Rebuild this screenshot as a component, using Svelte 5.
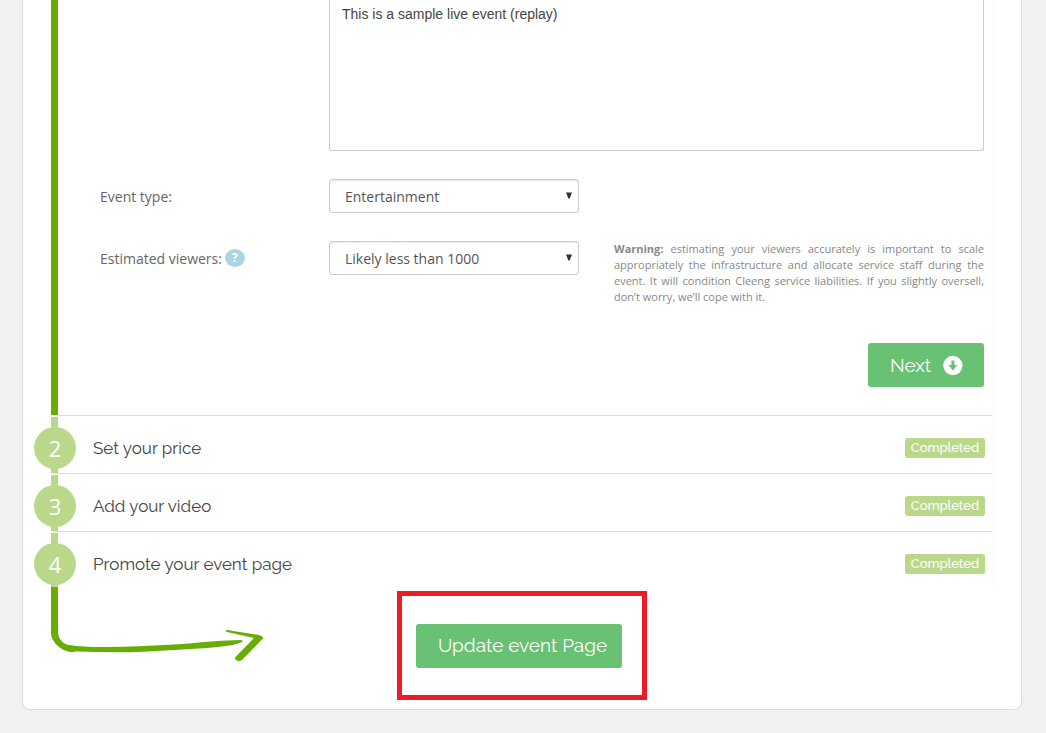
<script lang="ts">
  let description = $state('This is a sample live event (replay)');
  let eventType = $state('Entertainment');
  let viewers = $state('Likely less than 1000');

  const eventTypes = ['Entertainment', 'Sports', 'Education', 'Business'];
  const viewerRanges = ['Likely less than 1000', '1000 to 5000', 'More than 5000'];

  const steps = [
    { n: 2, title: 'Set your price', status: 'Completed' },
    { n: 3, title: 'Add your video', status: 'Completed' },
    { n: 4, title: 'Promote your event page', status: 'Completed' },
  ];
</script>

{#snippet caret()}
  <svg class="caret" width="6" height="7" viewBox="0 0 6 7" aria-hidden="true">
    <path d="M0 0.5H6L3.6 6.5H2.4Z" fill="#333" />
  </svg>
{/snippet}

<main class="card">
  <div class="steps">
    <section class="step-open">
      <form class="form" onsubmit={(e) => e.preventDefault()}>
        <span></span>
        <textarea aria-label="Description" bind:value={description}></textarea>

        <label class="label" for="type">Event type:</label>
        <div class="select">
          <select id="type" bind:value={eventType}>
            {#each eventTypes as t (t)}
              <option>{t}</option>
            {/each}
          </select>
          {@render caret()}
        </div>

        <div class="label">
          <label for="viewers">Estimated viewers:</label>
          <button type="button" class="help" aria-label="Help">?</button>
        </div>
        <div class="viewers">
          <div class="select">
            <select id="viewers" bind:value={viewers}>
              {#each viewerRanges as r (r)}
                <option>{r}</option>
              {/each}
            </select>
            {@render caret()}
          </div>
          <p class="warning">
            <strong>Warning:</strong> estimating your viewers accurately is important to scale
            appropriately the infrastructure and allocate service staff during the event. It will
            condition Cleeng service liabilities. If you slightly oversell, don’t worry, we’ll cope
            with it.
          </p>
        </div>

        <button type="submit" class="btn next">
          Next
          <svg width="20" height="20" viewBox="0 0 20 20" aria-hidden="true">
            <circle cx="10" cy="10.500" r="9.8" fill="#fff" />
            <path d="M8.5 5.500H11.5V10H14.5L10 15.5L5.5 10H8.5Z" fill="#69c173" />
          </svg>
        </button>
      </form>
    </section>

    {#each steps as step (step.n)}
      <section class="step">
        <div class="rail"><span class="num">{step.n}</span></div>
        <h2>{step.title}</h2>
        <span class="status">{step.status}</span>
      </section>
    {/each}
  </div>

  <footer class="footer">
    <svg class="arrow" width="216" height="78" viewBox="50 586 216 78" aria-hidden="true">
      <g fill="#67ad03">
        <path d="M51 587H58V632C58 639 64 645 70 645C72 645 74 646 76 646C88 647 97 647 107 647C128 646.6 149 646 170 644.7C192 643.5 212 640.8 233 640.2L241 640Q244 641 241.500 642.300C235 645 228 646 220 646.800C203 648.600 187 649.400 170 650.200C152 651.200 135 652.300 117 652.300C103 652.300 89 652 75 651.500Q73 652.500 68 651.500C60 650 51 641 51 633Z" />
        <path d="M226 630.300Q227 629.500 233 631L258 634.800Q263.500 636.500 263 638.500L242 660Q239 662 236.500 660.300Q234 658.500 236 656.500L254 638L227 632Q225.500 631.500 226 630.300Z" />
      </g>
    </svg>
    <div class="highlight">
      <button type="button" class="btn update">Update event Page</button>
    </div>
  </footer>
</main>

<style>
  :global(body) {
    background: #f1f1f1;
  }

  .card {
    margin: 0 24px 23px 22px;
    background: #fff;
    border: 1px solid #dcdcdc;
    border-top: 0;
    border-radius: 0 0 8px 8px;
    font-family: 'Open Sans', sans-serif;
    font-size: 14px;
    color: #666;
  }

  .steps {
    margin: 0 27px 0 11px;
    border-right: 1px solid #f9f9f9;
  }

  .step-open {
    padding: 0 9px 28px 66px;
    background: linear-gradient(#67ad03, #67ad03) 17px 0 / 7px 100% no-repeat;
  }

  .form {
    display: grid;
    grid-template-columns: 229px 1fr;
    row-gap: 28px;
  }

  textarea {
    box-sizing: border-box;
    width: 100%;
    height: 151px;
    padding: 4px 12px;
    border: 1px solid #ccc;
    border-top: 0;
    border-radius: 0 0 3px 3px;
    font: 14px/20px 'Liberation Sans', Arial, sans-serif;
    color: #444;
    resize: none;
    display: block;
  }

  .label {
    display: flex;
    align-items: center;
    gap: 3px;
    height: 34px;
  }

  .help {
    width: 20px;
    height: 18px;
    padding: 0;
    border: 0;
    border-radius: 50%;
    background: #a9d6e2;
    font: bold 12px/18px 'Open Sans', sans-serif;
    color: #fff;
  }

  .select {
    position: relative;
    flex: none;
    width: 250px;
    height: 34px;
  }

  select {
    appearance: none;
    box-sizing: border-box;
    width: 100%;
    height: 34px;
    padding: 0 24px 0 15px;
    border: 1px solid #ccc;
    border-radius: 3px;
    background: #fff;
    box-shadow: inset 0 1px 2px rgba(0, 0, 0, 0.1);
    font: 14px 'Open Sans', sans-serif;
    color: #555;
  }

  .caret {
    position: absolute;
    top: 13px;
    right: 7px;
    pointer-events: none;
  }

  .viewers {
    display: flex;
    gap: 35px;
    height: 64px;
  }

  .warning {
    flex: 1;
    margin: 0;
    font-size: 11px;
    line-height: 16px;
    text-align: justify;
    color: #888;
  }

  .btn {
    height: 44px;
    border: 0;
    border-radius: 3px;
    background: #69c173;
    font: 400 19px Raleway, Lato, sans-serif;
    color: #fff;
  }

  .next {
    grid-column: 2;
    justify-self: end;
    display: flex;
    align-items: center;
    gap: 12px;
    width: 116px;
    margin-top: 10px;
    padding: 0 21px 1px 22px;
  }

  .step {
    display: flex;
    align-items: center;
    box-sizing: border-box;
    height: 58px;
    padding-right: 8px;
    background: linear-gradient(#ddd, #ddd) 19px 0 / calc(100% - 20px) 1px no-repeat;
  }

  .rail {
    box-sizing: border-box;
    width: 42px;
    height: 58px;
    padding-top: 12px;
    background: linear-gradient(#b9d88a, #b9d88a) 17px 2px / 7px 56px no-repeat;
  }

  .num {
    display: block;
    height: 42px;
    border-radius: 50%;
    background: #b9d88a;
    font-size: 22px;
    line-height: 42px;
    text-align: center;
    color: #fff;
  }

  h2 {
    flex: 1;
    margin: 8px 0 0 17px;
    font: 400 17px/24px Raleway, Lato, sans-serif;
    color: #444;
  }

  .status {
    width: 80px;
    height: 20px;
    margin-top: 8px;
    border-radius: 3px;
    background: #b9d88a;
    font: 500 13px/20px Raleway, Lato, sans-serif;
    text-align: center;
    color: #fff;
  }

  .footer {
    display: grid;
    grid-template-columns: 1fr auto 1fr;
    padding: 2px 0 9px;
  }

  .arrow {
    margin: -5px 0 0 27px;
  }

  .highlight {
    padding: 28px 20px 27px 14px;
    border: 5px solid #ed1c24;
  }

  .update {
    display: block;
    width: 206px;
    padding: 0 0 2px 7px;
  }
</style>
